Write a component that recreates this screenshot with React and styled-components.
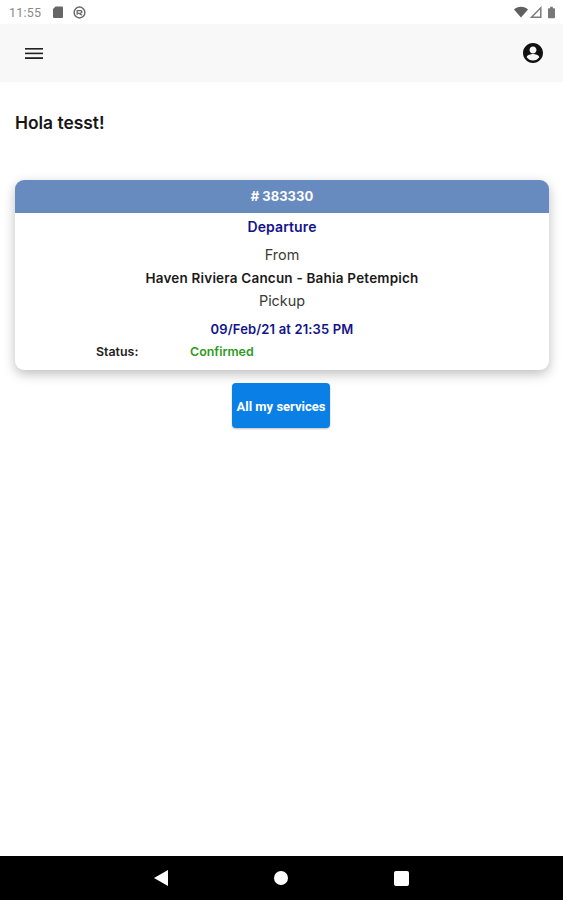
import React from 'react';
import styled, { createGlobalStyle } from 'styled-components';

const GlobalStyle = createGlobalStyle`
  html, body {
    margin: 0;
    padding: 0;
    background: #fff;
    font-family: "Inter", "Roboto", sans-serif;
  }
`;

const Screen = styled.div`
  display: flex;
  flex-direction: column;
  width: 563px;
  height: 900px;
  overflow: hidden;
  background: #fff;
`;

const StatusBar = styled.div`
  display: flex;
  align-items: center;
  justify-content: space-between;
  height: 24px;
  padding: 0 8px 0 9px;
  background: #fff;
  color: #8a8a8a;
`;

const StatusGroup = styled.div`
  display: flex;
  align-items: center;
  gap: ${(p) => p.$gap || 0}px;
`;

const Clock = styled.span`
  font-family: "Roboto", sans-serif;
  font-size: 12.5px;
  letter-spacing: 0.2px;
  margin-right: 12px;
`;

const Toolbar = styled.div`
  display: flex;
  align-items: center;
  justify-content: space-between;
  height: 58px;
  padding: 0 18px 0 25px;
  background: #f8f8f8;
  color: #111;
`;

const Content = styled.main`
  flex: 1;
  display: flex;
  flex-direction: column;
  padding: 0 14px 0 15px;
`;

const Greeting = styled.h1`
  margin: 31px 0 47px;
  height: 20px;
  font-size: 17.4px;
  line-height: 20px;
  font-weight: 600;
  color: #161616;
`;

const Card = styled.section`
  display: flex;
  flex-direction: column;
  height: 190px;
  border-radius: 9px;
  overflow: hidden;
  background: #fff;
  box-shadow: 0 4px 12px rgba(0, 0, 0, 0.26);
`;

const CardHeader = styled.div`
  height: 33px;
  line-height: 33px;
  text-align: center;
  background: #678abf;
  color: #fff;
  font-size: 13px;
  font-weight: 700;
`;

const CardBody = styled.div`
  flex: 1;
  display: flex;
  flex-direction: column;
  align-items: center;
`;

const Line = styled.div`
  height: ${(p) => p.$h}px;
  line-height: ${(p) => p.$h}px;
  font-size: ${(p) => p.$size || 14.4}px;
  font-weight: ${(p) => p.$weight || 400};
  letter-spacing: ${(p) => p.$spacing || 0}px;
  color: ${(p) => p.$color || '#3a3a3a'};
  white-space: nowrap;
`;

const StatusRow = styled.div`
  display: grid;
  grid-template-columns: 94px auto;
  align-self: flex-start;
  margin-left: 81px;
  height: 14px;
  line-height: 14px;
  font-size: 12.4px;
  font-weight: 600;
`;

const StatusLabel = styled.span`
  color: #222;
`;

const StatusValue = styled.span`
  color: #2f9a22;
`;

const ServicesButton = styled.button`
  align-self: center;
  width: 98px;
  height: 45px;
  margin: 13px 2px 0 0;
  padding: 1px 0 0;
  border: 0;
  border-radius: 4px;
  background: #0a7fe6;
  color: #fff;
  font-family: "Roboto", sans-serif;
  font-size: 13px;
  font-weight: 700;
  box-shadow: 0 1px 2px rgba(0, 0, 0, 0.25);
`;

const NavBar = styled.div`
  display: flex;
  align-items: center;
  justify-content: center;
  gap: 106px;
  height: 44px;
  background: #000;
`;

const App = () => {
  return (
    <Screen>
      <GlobalStyle />
      <StatusBar>
        <StatusGroup>
          <Clock>11:55</Clock>
          <svg width="10" height="12" viewBox="0 0 10 12" fill="#666" style={{ marginRight: 10 }}>
            <path d="M2.500 .5H9a1 1 0 0 1 1 1V11a1 1 0 0 1-1 1H1a1 1 0 0 1-1-1V3z" />
          </svg>
          <svg width="13" height="13" viewBox="0 0 14 14" fill="none" stroke="#6a6a6a">
            <circle cx="7" cy="7" r="5.800" strokeWidth="1.600" />
            <path d="M4.500 9.500V5h4.200l1 1.500-1.500 1.500H5M7 8l2.500 2" strokeWidth="1.400" />
          </svg>
        </StatusGroup>
        <StatusGroup $gap={2}>
          <svg width="14" height="12" viewBox="0 0 15 12" fill="#5f5f5f">
            <path d="M0 3.200C2 1.300 4.600.3 7.500.3s5.500 1 7.500 2.900L7.500 11.800z" />
          </svg>
          <svg width="12" height="12" viewBox="0 0 12 12" fill="none" stroke="#7c7c7c" strokeWidth="1.500">
            <path d="M10.800 1.800v9.400H1.500z" />
          </svg>
          <svg width="7" height="13" viewBox="0 0 8 13" fill="#777" style={{ marginLeft: 4 }}>
            <path d="M2.500 0h3v1.500H7a1 1 0 0 1 1 1V12a1 1 0 0 1-1 1H1a1 1 0 0 1-1-1V2.500a1 1 0 0 1 1-1h1.500z" />
          </svg>
        </StatusGroup>
      </StatusBar>

      <Toolbar>
        <svg width="18" height="11" viewBox="0 0 18 11" fill="#222">
          <rect y="0" width="18" height="1.600" />
          <rect y="4.600" width="18" height="1.600" />
          <rect y="9.200" width="18" height="1.800" />
        </svg>
        <svg width="24" height="24" viewBox="0 0 24 24" fill="#111">
          <path d="M12 2C6.480 2 2 6.480 2 12s4.480 10 10 10 10-4.480 10-10S17.520 2 12 2zm0 3.500c1.930 0 3.500 1.570 3.500 3.500s-1.570 3.500-3.500 3.500-3.500-1.570-3.500-3.500 1.570-3.500 3.500-3.500zm0 14c-2.600 0-4.900-1.300-6.300-3.300.03-2.100 4.200-3.200 6.300-3.200s6.270 1.100 6.300 3.200c-1.400 2-3.700 3.300-6.300 3.300z" />
        </svg>
      </Toolbar>

      <Content>
        <Greeting>Hola tesst!</Greeting>
        <Card>
          <CardHeader># 383330</CardHeader>
          <CardBody>
            <Line $h={28} $size={14} $spacing={0.1} $color="#13138a" $weight={600}>Departure</Line>
            <Line $h={28}>From</Line>
            <Line $h={19} $size={13.5} $spacing={0.2} $weight={600} $color="#1a1a1a">Haven Riviera Cancun - Bahia Petempich</Line>
            <Line $h={25}>Pickup</Line>
            <Line $h={32} $size={13} $spacing={0.15} $weight={600} $color="#13138a">09/Feb/21 at 21:35 PM</Line>
            <StatusRow>
              <StatusLabel>Status:</StatusLabel>
              <StatusValue>Confirmed</StatusValue>
            </StatusRow>
          </CardBody>
        </Card>
        <ServicesButton>All my services</ServicesButton>
      </Content>

      <NavBar>
        <svg width="14" height="16" viewBox="0 0 14 16" fill="#fff">
          <path d="M14 0v16L0 8z" />
        </svg>
        <svg width="14" height="14" viewBox="0 0 14 14" fill="#fff">
          <circle cx="7" cy="7" r="7" />
        </svg>
        <svg width="15" height="15" viewBox="0 0 15 15" fill="#fff">
          <rect width="15" height="15" rx="2" />
        </svg>
      </NavBar>
    </Screen>
  );
};

export default App;
